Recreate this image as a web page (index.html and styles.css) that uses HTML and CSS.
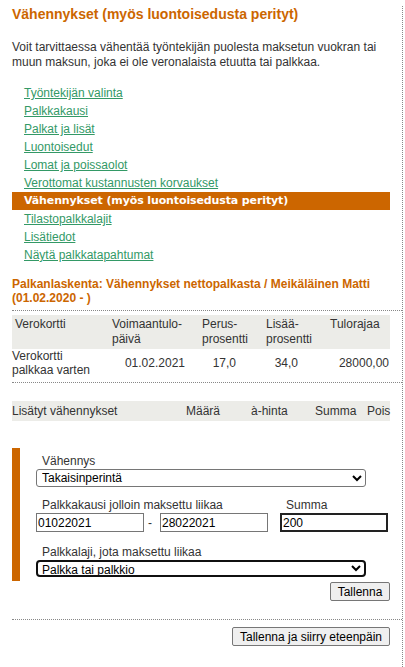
FILE: index.html
```html
<!DOCTYPE html>
<html lang="fi">
<head>
<meta charset="utf-8">
<title>Vähennykset</title>
<link rel="stylesheet" href="styles.css">
</head>
<body>
<div class="page">
  <h1 class="title">Vähennykset (myös luontoisedusta perityt)</h1>
  <p class="intro">Voit tarvittaessa vähentää työntekijän puolesta maksetun vuokran tai muun maksun, joka ei ole veronalaista etuutta tai palkkaa.</p>
  <ul class="nav">
    <li><a href="#">Työntekijän valinta</a></li>
    <li><a href="#">Palkkakausi</a></li>
    <li><a href="#">Palkat ja lisät</a></li>
    <li><a href="#">Luontoisedut</a></li>
    <li><a href="#">Lomat ja poissaolot</a></li>
    <li><a href="#">Verottomat kustannusten korvaukset</a></li>
    <li class="active">Vähennykset (myös luontoisedusta perityt)</li>
    <li><a href="#">Tilastopalkkalajit</a></li>
    <li><a href="#">Lisätiedot</a></li>
    <li><a href="#">Näytä palkkatapahtumat</a></li>
  </ul>
  <h2 class="subtitle">Palkanlaskenta: Vähennykset nettopalkasta / Meikäläinen Matti (01.02.2020 - )</h2>

  <div class="section tax-section">
    <table class="tax">
      <colgroup><col class="c1"><col class="c2"><col class="c3"><col class="c4"><col class="c5"></colgroup>
      <thead>
        <tr><th>Verokortti</th><th>Voimaantulo-<br>päivä</th><th>Perus-<br>prosentti</th><th>Lisää-<br>prosentti</th><th>Tulorajaa</th></tr>
      </thead>
      <tbody>
        <tr><td class="name">Verokortti<br>palkkaa varten</td><td class="n2">01.02.2021</td><td class="n3">17,0</td><td class="n4">34,0</td><td class="n5">28000,00</td></tr>
      </tbody>
    </table>
  </div>

  <div class="section deduction-section">
    <div class="ded-head">
      <span class="h1c">Lisätyt vähennykset</span>
      <span class="h2c">Määrä</span>
      <span class="h3c">à-hinta</span>
      <span class="h4c">Summa</span>
      <span class="h5c">Pois</span>
    </div>
    <div class="form">
      <div class="label">Vähennys</div>
      <select class="sel"><option>Takaisinperintä</option></select>
      <div class="row-labels">
        <span class="label period-label">Palkkakausi jolloin maksettu liikaa</span>
        <span class="label sum-label">Summa</span>
      </div>
      <div class="row-inputs">
        <input class="txt" type="text" value="01022021">
        <span class="dash">-</span>
        <input class="txt" type="text" value="28022021">
        <input class="txt sum" type="text" value="200">
      </div>
      <div class="label label3">Palkkalaji, jota maksettu liikaa</div>
      <select class="sel focused"><option>Palkka tai palkkio</option></select>
    </div>
    <div class="actions"><button class="btn">Tallenna</button></div>
  </div>

  <div class="section footer">
    <button class="btn">Tallenna ja siirry eteenpäin</button>
  </div>
</div>
</body>
</html>
```

FILE: styles.css
```css
* { box-sizing: border-box; }
html, body { margin: 0; padding: 0; background: #fff; }
body {
  font-family: "Liberation Sans", Arial, sans-serif;
  font-size: 12px;
  color: #333;
}
.page {
  margin-left: 12px;
  width: 391px;
  min-height: 667px;
  border-right: 1px dotted #888;
}
.page > .title, .page > .intro, .page > .nav, .page > .subtitle { margin-right: 12px; }
.title {
  margin: 6px 0 0;
  font-size: 14px;
  line-height: 16px;
  font-weight: bold;
  color: #cc6600;
}
.intro {
  margin: 18px 0 0;
  line-height: 15px;
}
.nav {
  list-style: none;
  margin: 14px 12px 0 0;
  padding: 0;
}
.nav li {
  height: 18px;
  line-height: 18px;
  padding-left: 12px;
}
.nav a { color: #339966; text-decoration: underline; }
.nav .active {
  background: #cc6600;
  color: #fff;
  font-family: "DejaVu Sans", Verdana, sans-serif;
  font-weight: bold;
  font-size: 11px;
  letter-spacing: -0.12px;
}
.subtitle {
  margin: 13px 12px 0 0;
  font-size: 12px;
  line-height: 14px;
  font-weight: bold;
  color: #cc6600;
}
.section {
  border-top: 1px dotted #888;
  padding-right: 12px;
}
.tax-section { margin-top: 5px; padding-top: 4px; padding-bottom: 5px; }
.tax {
  width: 378px;
  table-layout: fixed;
  border-collapse: collapse;
}
.tax .c1 { width: 97px; }
.tax .c2 { width: 90px; }
.tax .c3 { width: 64px; }
.tax .c4 { width: 64px; }
.tax .c5 { width: 63px; }
.tax th {
  background: #ecece8;
  font-weight: normal;
  text-align: left;
  vertical-align: top;
  padding: 2px 0 2px 3px;
  line-height: 15px;
}
.tax td {
  padding: 0;
  line-height: 14px;
  vertical-align: middle;
  text-align: right;
}
.tax td.name { text-align: left; }
.tax td.n2 { padding-right: 14px; }
.tax td.n3 { padding-right: 27px; }
.tax td.n4 { padding-right: 29px; }
.tax td.n5 { padding-right: 1px; }

.deduction-section { padding-top: 18px; padding-bottom: 18px; }
.ded-head {
  display: flex;
  background: #ecece8;
  height: 20px;
  line-height: 20px;
}
.h1c { width: 174px; }
.h2c { width: 65px; }
.h3c { width: 64px; }
.h4c { width: 52px; }
.h5c { width: 23px; }

.form {
  margin-top: 27px;
  border-left: 8px solid #cc6600;
  padding: 6px 0 4px 16px;
}
.label {
  padding-left: 6px;
  line-height: 15px;
}
.sel {
  display: block;
  width: 330px;
  height: 18px;
  font-family: "Liberation Sans", Arial, sans-serif;
  font-size: 12px;
  color: #000;
  background: #fff;
  border: 1px solid #767676;
  border-radius: 3px;
  padding: 0 0 0 1px;
  margin: 0;
}
.sel.focused {
  border: 2px solid #101010;
  border-radius: 4px;
  height: 17px;
  padding-left: 0;
}
.row-labels {
  display: flex;
  margin-top: 11px;
  line-height: 15px;
}
.period-label { width: 244px; }
.sum-label { padding-left: 6px; }
.row-inputs {
  display: flex;
  align-items: center;
  height: 19px;
}
.txt {
  width: 108px;
  height: 19px;
  margin: 0;
  padding: 0 1px;
  font-family: "Liberation Sans", Arial, sans-serif;
  font-size: 12px;
  color: #000;
  border: 1px solid #767676;
  background: #fff;
  border-radius: 0;
}
.dash { width: 16px; padding-left: 4px; color: #333; }
.txt.sum {
  margin-left: 12px;
  border: 2px solid #222;
  padding: 0 0 0 1px;
}
.label3 { margin-top: 13px; }
.actions {
  display: flex;
  justify-content: flex-end;
  margin-top: 1px;
}
.btn {
  font-family: "Liberation Sans", Arial, sans-serif;
  font-size: 12px;
  color: #000;
  background: #efefef;
  border: 1px solid #767676;
  border-radius: 2px;
  height: 19px;
  padding: 0 6px;
  margin: 0;
}
.actions .btn { width: 60px; }
.footer {
  display: flex;
  justify-content: flex-end;
  padding-top: 7px;
}
.footer .btn { width: 158px; }
```
